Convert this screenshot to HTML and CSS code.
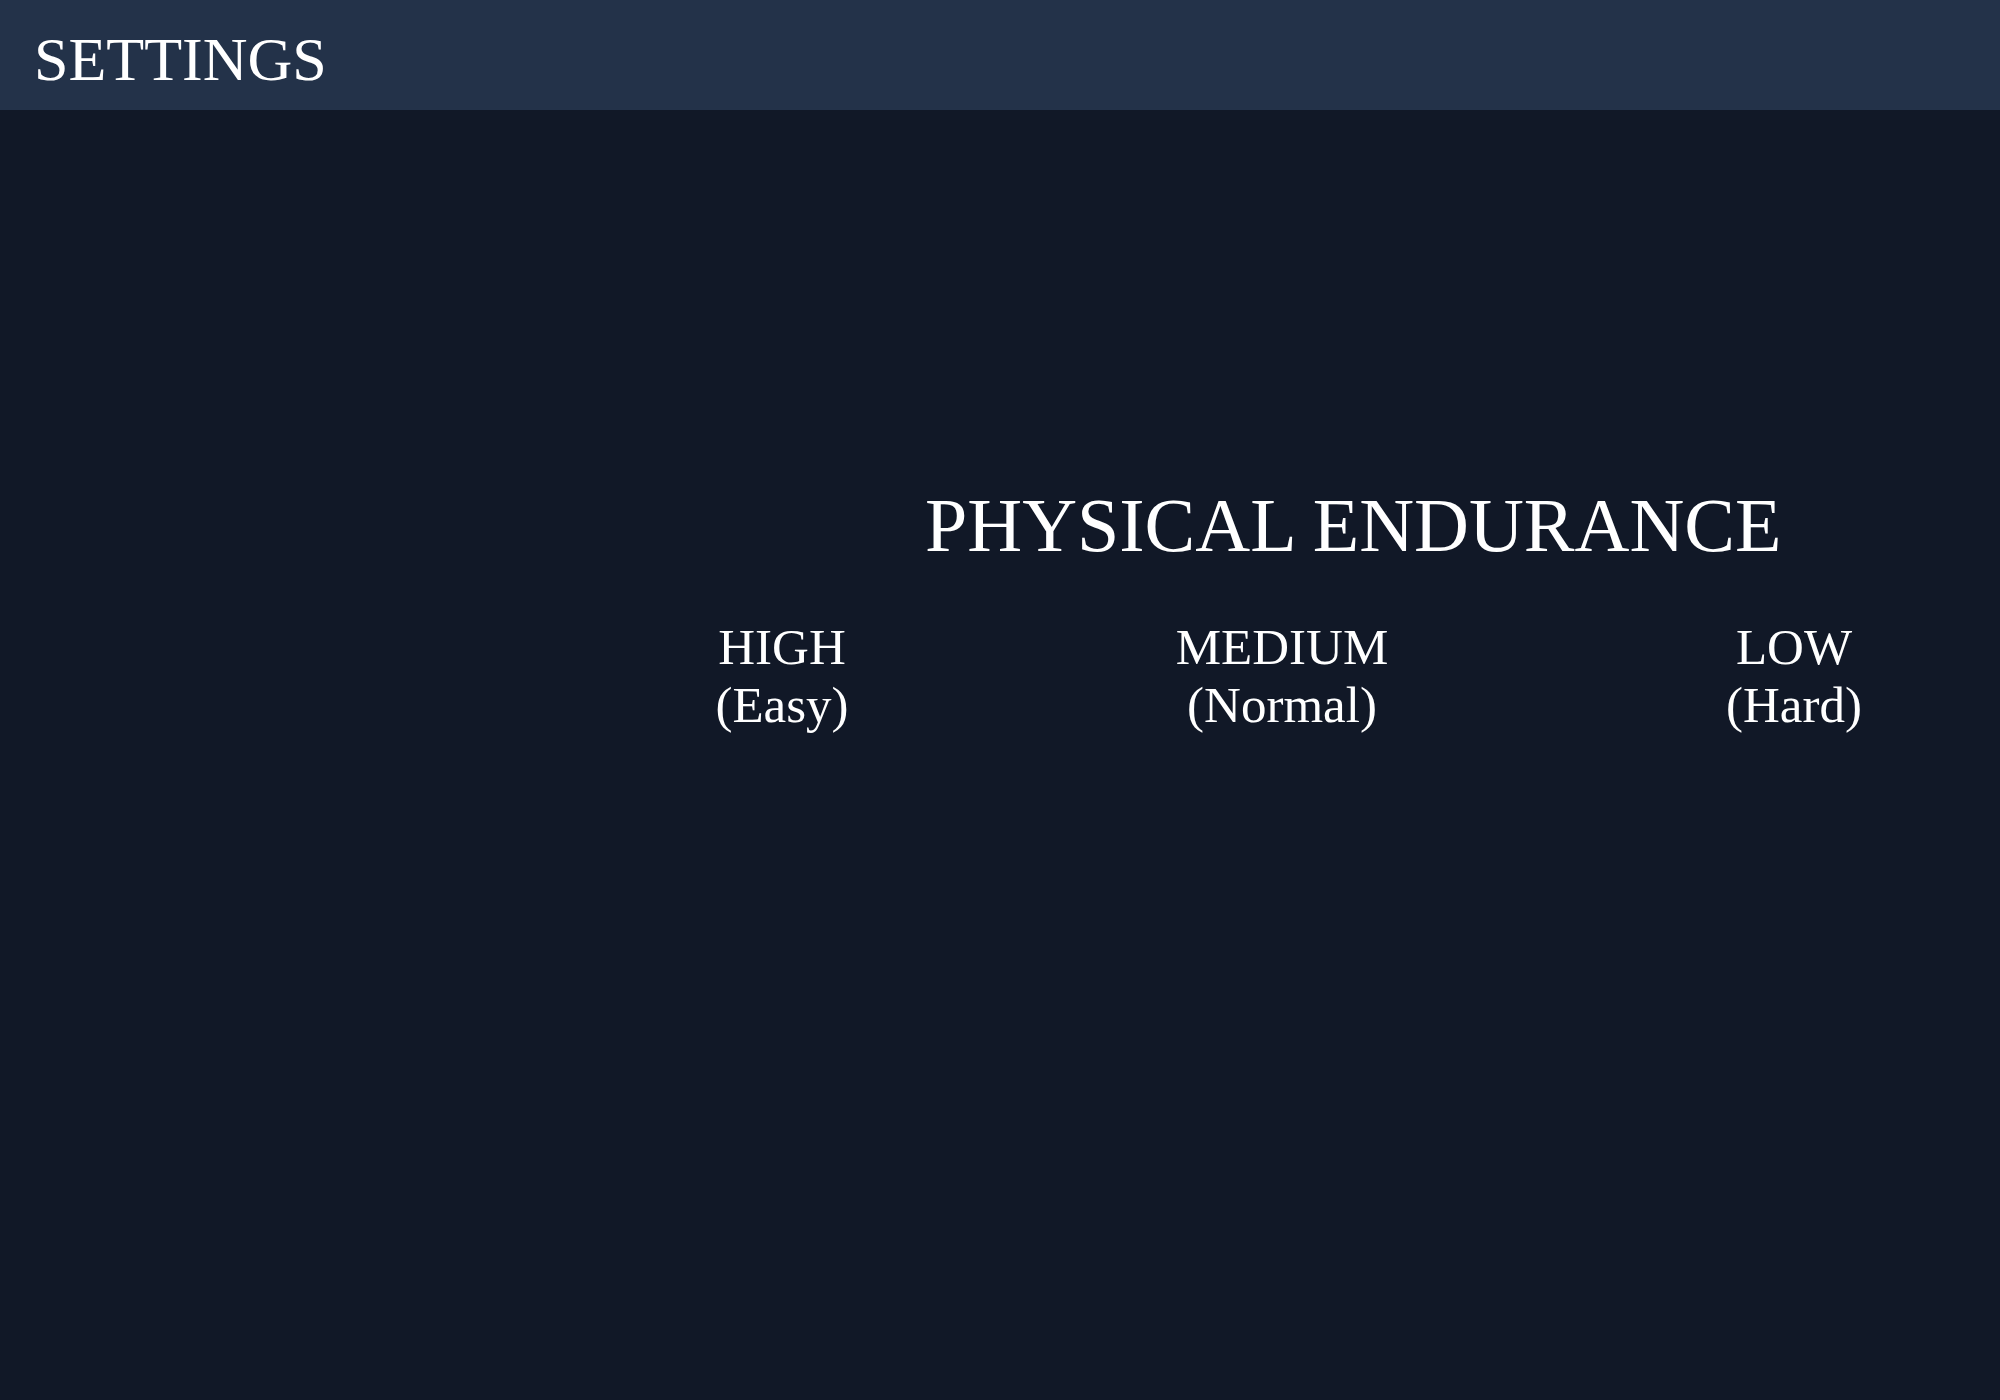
FILE: index.html
```html
<!DOCTYPE html>
<html lang="en">
<head>
<meta charset="utf-8">
<title>Settings</title>
<link rel="stylesheet" href="styles.css">
</head>
<body>
<header class="topbar">
  <h1 class="topbar-title">SETTINGS</h1>
</header>
<main class="content">
  <h2 class="section-title">PHYSICAL ENDURANCE</h2>
  <div class="options">
    <div class="option high">HIGH<br>(Easy)</div>
    <div class="option medium">MEDIUM<br>(Normal)</div>
    <div class="option low">LOW<br>(Hard)</div>
  </div>
</main>
</body>
</html>
```
FILE: styles.css
```css
html, body {
  margin: 0;
  padding: 0;
}
body {
  background: #111827;
  color: #ffffff;
  font-family: "Liberation Serif", "Times New Roman", serif;
  width: 2000px;
  height: 1400px;
  overflow: hidden;
}
.topbar {
  height: 110px;
  box-sizing: border-box;
  background: #233249;
  padding: 28px 0 0 34px;
}
.topbar-title {
  margin: 0;
  font-size: 62px;
  line-height: 1;
  font-weight: normal;
}
.content {
  padding-top: 377px;
}
.section-title {
  margin: 0 0 55px 0;
  padding-left: 925px;
  font-size: 76px;
  line-height: 1;
  font-weight: normal;
  white-space: nowrap;
}
.options {
  display: flex;
  padding-left: 632px;
}
.option {
  width: 300px;
  text-align: center;
  font-size: 51px;
  line-height: 58px;
}
.option.medium {
  margin-left: 200px;
}
.option.low {
  margin-left: 212px;
}
```
